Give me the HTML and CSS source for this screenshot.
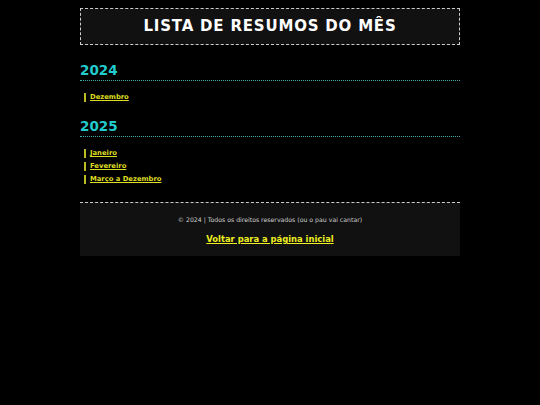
FILE: index.html
```html
<!DOCTYPE html>
<html lang="pt">
<head>
    <meta charset="UTF-8">
    <meta name="viewport" content="width=device-width, initial-scale=1.0">
    <title>Lista de Resumos do Mês</title>
    <link rel="stylesheet" href="styles.css">
</head>
<body>
    <div class="container">
        <!-- Cabeçalho -->
        <header>
            <h1>LISTA DE RESUMOS DO MÊS</h1>
        </header>

        <!-- Anos -->
        <section class="year">
            <h2>2024</h2>
            <ul>
                <li><a href="#">Dezembro</a></li>
            </ul>
        </section>

        <section class="year">
            <h2>2025</h2>
            <ul>
                <li><a href="#">Janeiro</a></li>
                <li><a href="#">Fevereiro</a></li>
                <li><a href="#">Março a Dezembro</a></li>
            </ul>
        </section>

        <!-- Rodapé -->
        <footer>
            <p>© 2024 | Todos os direitos reservados (ou o pau vai cantar)</p>
            <a href="#" class="back">Voltar para a página inicial</a>
        </footer>
    </div>
</body>
</html>
```

FILE: styles.css
```css
body {
    font-family: "DejaVu Sans", Verdana, sans-serif;
    margin: 0;
    padding: 0;
    background-color: #000000;
    color: #dddddd;
}
.container {
    width: 380px;
    margin: 8px auto 0;
}
header {
    background-color: #111111;
    border: 1px dashed #cccccc;
    padding: 8px 0;
    text-align: center;
}
header h1 {
    margin: 0;
    font-size: 15px;
    letter-spacing: 0.8px;
    color: #ffffff;
    line-height: 19px;
}
.year h2 {
    margin: 17px 0 0;
    font-size: 13.5px;
    line-height: 16px;
    color: #22cccc;
    padding-bottom: 2px;
    border-bottom: 1px dotted #44aaaa;
}
.year + .year h2 {
    margin-top: 16px;
}
.year ul {
    list-style: none;
    margin: 12px 0 0;
    padding: 0 0 0 4px;
}
.year li {
    border-left: 2px solid #bbbb22;
    padding-left: 4px;
    margin-bottom: 4px;
    font-size: 6.8px;
    line-height: 9px;
}
.year li a {
    color: #dddd22;
    font-weight: bold;
}
footer {
    margin-top: 18px;
    background-color: #111111;
    border-top: 1px dashed #cccccc;
    text-align: center;
    padding: 13px 0 11px;
    font-size: 8.4px;
    line-height: 11px;
}
footer p {
    margin: 0 0 10px;
    font-size: 6.2px;
    line-height: 8px;
    color: #cccccc;
}
footer .back {
    color: #eeee22;
    font-weight: bold;
}
```
